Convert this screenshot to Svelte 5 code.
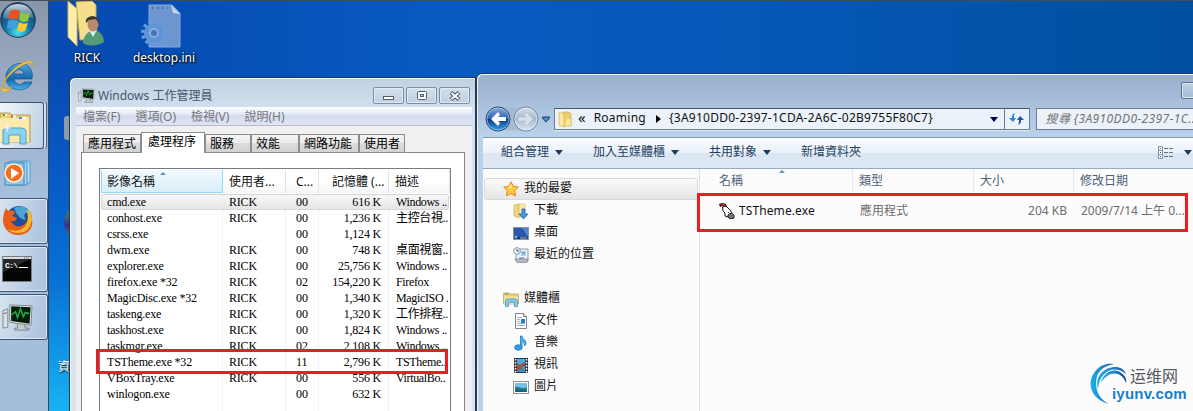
<script lang="ts">
	const processes = [
		{ name: 'cmd.exe', user: 'RICK', cpu: '00', memory: '616 K', desc: 'Windows ..' },
		{ name: 'conhost.exe', user: 'RICK', cpu: '00', memory: '1,236 K', desc: '主控台視..' },
		{ name: 'csrss.exe', user: '', cpu: '00', memory: '1,124 K', desc: '' },
		{ name: 'dwm.exe', user: 'RICK', cpu: '00', memory: '748 K', desc: '桌面視窗..' },
		{ name: 'explorer.exe', user: 'RICK', cpu: '00', memory: '25,756 K', desc: 'Windows ..' },
		{ name: 'firefox.exe *32', user: 'RICK', cpu: '02', memory: '154,220 K', desc: 'Firefox' },
		{ name: 'MagicDisc.exe *32', user: 'RICK', cpu: '00', memory: '1,340 K', desc: 'MagicISO .' },
		{ name: 'taskeng.exe', user: 'RICK', cpu: '00', memory: '1,320 K', desc: '工作排程..' },
		{ name: 'taskhost.exe', user: 'RICK', cpu: '00', memory: '1,824 K', desc: 'Windows ..' },
		{ name: 'taskmgr.exe', user: 'RICK', cpu: '02', memory: '2,108 K', desc: 'Windows ..' },
		{ name: 'TSTheme.exe *32', user: 'RICK', cpu: '11', memory: '2,796 K', desc: 'TSTheme..' },
		{ name: 'VBoxTray.exe', user: 'RICK', cpu: '00', memory: '556 K', desc: 'VirtualBo..' },
		{ name: 'winlogon.exe', user: '', cpu: '00', memory: '632 K', desc: '' }
	];

	const menus = ['檔案(F)', '選項(O)', '檢視(V)', '說明(H)'];

	const tabs = [
		{ label: '應用程式', width: 58 },
		{ label: '處理程序', width: 64, active: true },
		{ label: '服務', width: 46 },
		{ label: '效能', width: 48 },
		{ label: '網路功能', width: 60 },
		{ label: '使用者', width: 46 }
	];

	const commands = [
		{ label: '組合管理', menu: true },
		{ label: '加入至媒體櫃', menu: true },
		{ label: '共用對象', menu: true },
		{ label: '新增資料夾', menu: false }
	];

	const favorites = [
		{ label: '下載', icon: 'download' },
		{ label: '桌面', icon: 'desktop' },
		{ label: '最近的位置', icon: 'recent' }
	];

	const libraries = [
		{ label: '文件', icon: 'document' },
		{ label: '音樂', icon: 'music' },
		{ label: '視訊', icon: 'video' },
		{ label: '圖片', icon: 'picture' }
	];
</script>

{#snippet navIcon(kind: string)}
	<svg class="nav-icon" width="16" height="16" viewBox="0 0 16 16">
		{#if kind === 'download'}
			<path d="M1 2l5-1v14l-5-2z" fill="#efd684" stroke="#c9a64a" stroke-width=".6" />
			<path d="M6 1h6v13H6z" fill="#f8e9a9" stroke="#d4b55c" stroke-width=".6" />
			<path d="M9 6h3v5h3l-4.500 5L6 11h3z" fill="#3e9be8" stroke="#1c65b5" stroke-width=".8" />
		{:else if kind === 'desktop'}
			<rect x=".5" y="2.500" width="15" height="12" fill="#2857a8" stroke="#8a94a0" />
			<path d="M8 3h7v8C12 9 13 6 8 3z" fill="#5287d2" />
			<path d="M1 12h14v2H1z" fill="#18305e" />
			<circle cx="3" cy="12" r="1.500" fill="#59b7ee" />
			<path d="M7 13h7" stroke="#9fc1e8" />
		{:else if kind === 'recent'}
			<path d="M5 2h10v12H3V8" fill="#eef2f5" stroke="#8d969d" />
			<path d="M8 4h5v5H8z" fill="#a2d2f1" />
			<path d="M9 6h3M6 11h5" stroke="#3477b3" />
			<path d="M2 12h13l-1 3.500H4z" fill="#b6bcc0" stroke="#7b848a" stroke-width=".7" />
			<circle cx="4" cy="4" r="3.400" fill="#edf4fb" stroke="#8698a9" />
			<path d="M4 2v2h2" fill="none" stroke="#365a88" />
		{:else if kind === 'document'}
			<path d="M2.500.5h8l3 3v12h-11z" fill="#fff" stroke="#7e858d" />
			<path d="M10.500.5v3h3" fill="#dfe6ed" stroke="#7e858d" />
			<path d="M4 4.500h5M4 6.500h3M4 8.500h3M4 10.500h8M4 12.500h8" stroke="#9eadd1" />
			<path d="M8 6h4v4H8z" fill="#2578c6" />
		{:else if kind === 'music'}
			<path d="M7.500 12V1h1.500c0 3 4 3.500 4 7 0 1.500-1 2.500-1.500 3 0-3-1-4-2.500-4.500V12z" fill="#4cb3ed" stroke="#1c79c1" stroke-width=".8" />
			<ellipse cx="5.400" cy="12.500" rx="3.800" ry="2.800" fill="#309bdf" stroke="#1c79c1" stroke-width=".7" />
		{:else if kind === 'video'}
			<rect x="1" y="1" width="14" height="15" fill="#303841" />
			<path d="M4 2h8v6H4z" fill="#4ba9e6" />
			<path d="M4 9h8v6H4z" fill="#3496d9" />
			<path d="M4 6l3 2 4-3 1 3-4 2 3 4-3-2-4 2z" fill="#a64e31" />
			<path d="M2.500 2v14M13.500 2v14" stroke="#fff" stroke-width="1.500" stroke-dasharray="1.500 1.500" />
		{:else}
			<rect x=".5" y="2.500" width="15" height="12" fill="#fff" stroke="#8d9298" />
			<path d="M2 4h12v9H2z" fill="#75bfeb" />
			<path d="M2 8c4-1 7 3 12 0v5H2z" fill="#277f70" />
			<path d="M2 11c4-2 7 1 12 0v2H2z" fill="#195d9b" />
		{/if}
	</svg>
{/snippet}

{#snippet library(size: number)}
	<svg width={size} height={size} viewBox="0 0 16 16">
		<path d="M.5 2h6l1 1h8v10H.5z" fill="#e8cd72" stroke="#bba250" stroke-width=".7" />
		<path d="M2 3h3" stroke="#35a653" />
		<path d="M1 5h14v8H1z" fill="#f3df92" />
		<path d="M2.500 15.500V10q0-2 2-2h7q3 0 3 2v5.500h-3v-4h-6v4z" fill="#86c9eb" stroke="#4a9cca" stroke-width=".8" />
	</svg>
{/snippet}

{#snippet monitor(size: number)}
	<svg width={size} height={size} viewBox="0 0 32 32">
		<path d="M1 9l5-2v19l-5 1z" fill="#dce1e3" stroke="#7c878c" />
		<path d="M2 12l3-1" stroke="#59656c" />
		<path d="M16 22h7l1 5h4v2H13v-2h3z" fill="#c3ccd0" stroke="#79858a" />
		<path d="M8 3l23 1-1 20-22-3z" fill="#e1e6e8" stroke="#7e898e" />
		<path d="M9.500 4.500l20 1-1 17-19-3z" fill="#071d0b" />
		<path d="M10 13l4-3 2 6 3-9 3 8 2-4 4 1" fill="none" stroke="#27a846" stroke-width="1.600" />
	</svg>
{/snippet}

<div class="screen">
	<aside class="taskbar">
		<div class="slot start">
			<svg width="40" height="40" viewBox="0 0 40 40">
				<defs>
					<radialGradient id="orb" cx=".5" cy=".85" r=".8">
						<stop offset="0" stop-color="#4fe0f5" />
						<stop offset=".45" stop-color="#1572a9" />
						<stop offset="1" stop-color="#17395c" />
					</radialGradient>
					<linearGradient id="gloss" x2="0" y2="1">
						<stop stop-color="#eff7fc" stop-opacity=".85" />
						<stop offset="1" stop-color="#bcd4e5" stop-opacity=".25" />
					</linearGradient>
				</defs>
				<circle cx="18" cy="19" r="17.300" fill="url(#orb)" stroke="#1d3c59" />
				<path d="M3 17C4 6 11 3 18 3s15 4 15 14c-10-3-20 3-30 0z" fill="url(#gloss)" />
				<path d="M10 10c4-2 7-2 10 0l-2 9c-3-2-6-2-10 0z" fill="#e45424" />
				<path d="M21 11c3 2 6 2 9 0l-2 9c-4 2-6 1-9-1z" fill="#8dc63f" />
				<path d="M8 20c3-2 6-2 10 0l-2 8c-3-2-6-2-9 0z" fill="#41a0df" />
				<path d="M19 21c3 2 5 2 9 1l-3 8c-3 1-5 1-8-1z" fill="#f8ca36" />
			</svg>
		</div>
		<div class="slot ie">
			<svg width="38" height="34" viewBox="0 0 38 34">
				<defs>
					<linearGradient id="e-fill" x2="0" y2="1">
						<stop stop-color="#4ba6e2" /><stop offset=".6" stop-color="#1465ae" /><stop offset="1" stop-color="#49b6ee" />
					</linearGradient>
				</defs>
				<path d="M32 19H14c1 6 8 7 10 3h8C28 33 8 33 6 19 5 5 20 0 28 6c4 4 5 8 4 13zM14 14h10c-1-6-9-6-10 0z" fill="url(#e-fill)" stroke="#165389" stroke-width=".7" />
				<path d="M32 7C34-1 21 4 11 14 2 23 1 30 6 29c2 0 4-1 6-3-3 6-12 9-10 1C4 18 14 6 25 2c6-2 9-1 7 5z" fill="#f6c83e" stroke="#cd941c" stroke-width=".6" />
			</svg>
		</div>
		<div class="slot task folder">
			<svg width="34" height="36" viewBox="0 0 34 36">
				<path d="M0 2h10l2 2h18v27H0z" fill="#efcf76" stroke="#b99c50" />
				<path d="M0 7h29v24H0z" fill="#faebac" />
				<path d="M3 4h4M12 5.500h4M20 7h6" stroke="#fff" stroke-width="2" />
				<path d="M3 4h2" stroke="#2aa952" stroke-width="2" /><path d="M11 5.500h2" stroke="#d84230" stroke-width="2" /><path d="M19 7h3" stroke="#3b91d7" stroke-width="2" />
				<path d="M3 33V20q0-3 4-3h14q5 0 5 4v12h-6V24H9v9z" fill="#8cd1ed" stroke="#4aa2c9" />
				<path d="M7 13v8M3 17h8" stroke="#fff" />
			</svg>
		</div>
		<div class="slot media">
			<svg width="34" height="32" viewBox="0 0 34 32">
				<path d="M9 3h19v22H9z" fill="#b6dcf1" stroke="#5c9fc7" />
				<path d="M6 4h19v23H6z" fill="#a7d2eb" stroke="#4a95c2" />
				<path d="M3 5h19v22H3z" fill="#91c5e6" stroke="#418bbb" />
				<circle cx="12" cy="15" r="9" fill="#f06e1d" stroke="#fff0d6" stroke-width="1.500" />
				<path d="M9 10l8 5-8 6z" fill="#fff" />
			</svg>
		</div>
		<div class="slot task">
			<svg width="34" height="34" viewBox="0 0 34 34">
				<circle cx="17" cy="15" r="13" fill="#1d4f94" />
				<path d="M12 4c6-3 13-1 15 5-5-1-6 3-3 7-5 0-9-4-12-12z" fill="#4ba4d7" />
				<path d="M4 4c1 2 2 3 4 3 2-1 5 0 5 2l-3 3c2 1 4 1 5 2-1 3-3 4-6 3 2 5 8 7 12 4 4-2 6-7 4-12l5 6C32 25 25 31 16 31 7 31 1 24 1 16 1 12 2 8 4 4z" fill="#e95f19" />
				<path d="M25 5c5 4 6 9 4 14-1 6-6 10-13 10-4 0-7-1-10-4 11 5 20-2 20-11 0-4-1-6-1-9z" fill="#f8b831" />
			</svg>
		</div>
		<div class="slot task">
			<svg width="30" height="26" viewBox="0 0 30 26">
				<rect x=".5" y=".5" width="29" height="25" fill="#050505" stroke="#777e85" />
				<path d="M1 1h28v2H1z" fill="#d9dddf" />
				<path d="M22 2h6" stroke="#555" stroke-dasharray="1 1" />
				<path d="M1 3h28L1 16z" fill="#454545" opacity=".55" />
				<text x="3" y="12" class="prompt">C:\</text>
				<path d="M17 11.500h9" stroke="#fff" />
			</svg>
		</div>
		<div class="slot task">{@render monitor(31)}</div>
	</aside>

	<div class="shortcut user">
		<svg width="40" height="47" viewBox="0 0 40 47">
			<path d="M9 1l16-1 4 4v34l-16 1z" fill="#f5df8d" stroke="#c6a950" />
			<path d="M1 0l9 8v37L1 36z" fill="#ffedac" stroke="#d2b762" />
			<path d="M16 42c0-7 6-13 11-13 7 1 10 7 10 12-5 4-16 5-21 1z" fill="#569b77" />
			<path d="M22 29l4 7 4-7z" fill="#e0efe5" />
			<ellipse cx="26" cy="23" rx="5.500" ry="7.500" fill="#b88b6d" />
			<path d="M19 22c-2-9 15-9 13 1l-3-5-7 1z" fill="#38342f" />
		</svg>
		<span>RICK</span>
	</div>
	<div class="shortcut ini">
		<svg width="40" height="45" viewBox="0 0 40 45">
			<path d="M8 2h23l8 8v34H8z" fill="#88a9d8" stroke="#a4bfe3" opacity=".8" />
			<path d="M30 2l2 8 7 1z" fill="#c5d6ef" />
			<path d="M11 5h16" stroke="#4d77b6" stroke-width="2" stroke-dasharray="2 3" />
			<path d="M13 14h22M13 18h22M13 22h22M13 26h22M13 30h22M13 34h22" stroke="#6f96cd" />
			<circle cx="13" cy="30" r="11" fill="none" stroke="#6a9bda" stroke-width="4" stroke-dasharray="3 2.760" />
			<circle cx="13" cy="30" r="7.500" fill="#8cafdd" stroke="#5f94d5" stroke-width="5" />
			<circle cx="13" cy="30" r="3" fill="#3f74b8" />
		</svg>
		<span>desktop.ini</span>
	</div>
	<div class="desktop-orb"></div>
	<div class="desktop-recycle"></div>
	<span class="desktop-label">資</span>

	<section class="taskmgr">
		<header class="titlebar">
			{@render monitor(17)}
			<h1>Windows <b>工作管理員</b></h1>
			<div class="controls">
				<span><svg width="12" height="12"><rect x=".5" y="6.500" width="10" height="3" fill="#fff" stroke="#525d6c" /></svg></span>
				<span><svg width="12" height="12"><rect x="1.500" y="1.500" width="9" height="8" rx="1" fill="#fff" stroke="#525d6c" /><rect x="4.500" y="4.500" width="3" height="2" fill="#b5c8dc" stroke="#525d6c" /></svg></span>
				<span><svg width="12" height="12"><path d="M2 2.500l8 7M10 2.500l-8 7" stroke="#525d6c" stroke-width="4" /><path d="M2.500 3l7 6M9.500 3l-7 6" stroke="#fff" stroke-width="1.800" /></svg></span>
			</div>
		</header>
		<nav class="menubar">
			{#each menus as item}<span>{item}</span>{/each}
		</nav>
		<div class="client">
			<div class="tabs">
				{#each tabs as tab}
					<div class="tab" class:active={tab.active} style="width: {tab.width}px">{tab.label}</div>
				{/each}
			</div>
			<div class="panel">
				<div class="list">
					<div class="grid head">
						<span class="sorted">影像名稱</span>
						<span>使用者...</span>
						<span>C...</span>
						<span>記憶體 (...</span>
						<span>描述</span>
					</div>
					<div class="rows">
						{#each processes as process, i}
							<div class="grid row" class:focused={i === 0}>
								<span>{process.name}</span>
								<span>{process.user}</span>
								<span>{process.cpu}</span>
								<span>{process.memory}</span>
								<span>{process.desc}</span>
							</div>
						{/each}
					</div>
				</div>
			</div>
		</div>
	</section>

	<section class="explorer">
		<div class="caption"><span class="window-button"></span></div>
		<div class="location">
			<svg class="history" width="70" height="28" viewBox="0 0 70 28">
				<defs>
					<linearGradient id="back" x2="0" y2="1">
						<stop stop-color="#8aaede" /><stop offset=".48" stop-color="#2b64b4" />
						<stop offset=".5" stop-color="#0b3486" /><stop offset="1" stop-color="#30a8eb" />
					</linearGradient>
					<linearGradient id="forward" x2="0" y2="1">
						<stop stop-color="#d4e0ec" /><stop offset=".5" stop-color="#a4b8ce" /><stop offset="1" stop-color="#dce9f5" />
					</linearGradient>
				</defs>
				<path d="M14 2c10 0 14 2 28 0l10 5v14l-10 5-28-1z" fill="#a0b5cd" opacity=".7" />
				<circle cx="14" cy="14" r="12" fill="url(#back)" stroke="#27446e" />
				<circle cx="14" cy="14" r="11" fill="none" stroke="#b4d1f1" opacity=".7" />
				<path d="M7 14l7-7 2 3-2 2h8v4h-8l2 2-2 3z" fill="#fff" />
				<circle cx="42" cy="14" r="12" fill="url(#forward)" stroke="#70839c" />
				<circle cx="42" cy="14" r="11" fill="none" stroke="#e9f2fa" opacity=".7" />
				<path d="M49 14l-7-7-2 3 2 2h-8v4h8l-2 2 2 3z" fill="#d5e0eb" stroke="#a9b9cc" stroke-width=".5" />
				<path d="M58.500 12h7v1l-3.500 4-3.500-4z" fill="#4d91c9" stroke="#183b6b" />
			</svg>
			<div class="address">
				<svg width="15" height="17" viewBox="0 0 15 17">
					<path d="M5 1h6l2 2v12H5z" fill="#edcf70" stroke="#c1a044" stroke-width=".6" />
					<path d="M1 1l5 2v13l-5-2z" fill="#ffe9a0" stroke="#d0ad4c" stroke-width=".6" />
					<path d="M9 7h4v8H7" fill="#ffe79b" stroke="#cdae58" stroke-width=".5" />
				</svg>
				<span class="chevrons">«</span>
				<span class="crumb">Roaming</span>
				<svg class="arrow" width="5" height="8"><path d="M0 0l5 4-5 4z" fill="#000" /></svg>
				<span class="crumb guid">{'{3A910DD0-2397-1CDA-2A6C-02B9755F80C7}'}</span>
				<svg class="drop" width="8" height="5"><path d="M0 0h8L4 5z" fill="#00005c" /></svg>
				<span class="refresh">
					<svg width="15" height="14" viewBox="0 0 15 14">
						<path d="M6 1C3 2 3 4 3 6H0l4 4 3-4H5c0-2 0-3 1-5z" fill="#2787d5" />
						<path d="M9 13c3-1 3-3 3-5h3l-4-4-3 4h2c0 2 0 3-1 5z" fill="#1c57a7" />
					</svg>
				</span>
			</div>
			<div class="search">搜尋 {'{3A910DD0-2397-1C...'}</div>
		</div>
		<div class="commands">
			{#each commands as command}
				<span>{command.label}{#if command.menu}<svg width="8" height="5"><path d="M0 0h8L4 5z" fill="#1e395b" /></svg>{/if}</span>
			{/each}
			<div class="view">
				<svg width="16" height="13" viewBox="0 0 16 13">
					<path d="M.5.5h4v12h-4zM.5 4.500h4M.5 8.500h4" fill="#fff" stroke="#8692a3" />
					<path d="M2 2.500h1M2 6.500h1M2 10.500h1" stroke="#334c75" />
					<path d="M6 2.500h9M6 6.500h9M6 10.500h9" stroke="#667487" stroke-dasharray="4 1" />
				</svg>
				<svg width="8" height="5"><path d="M0 0h8L4 5z" fill="#1e395b" /></svg>
			</div>
		</div>
		<div class="body">
			<nav class="sidebar">
				<div class="group selected">
					<svg width="16" height="16" viewBox="0 0 16 16"><path d="M8 .8l2.300 4.600 5 .7-3.600 3.600.9 5.200L8 12.500l-4.600 2.400.9-5.200L.7 6.100l5-.7z" fill="#ffcc3f" stroke="#e38321" /><path d="M8 3l1 4-5-.5 2-.5z" fill="#fff0a0" /></svg>
					<span>我的最愛</span>
				</div>
				{#each favorites as item}
					<div class="entry">{@render navIcon(item.icon)}<span>{item.label}</span></div>
				{/each}
				<div class="group libraries">{@render library(16)}<span>媒體櫃</span></div>
				{#each libraries as item}
					<div class="entry">{@render navIcon(item.icon)}<span>{item.label}</span></div>
				{/each}
			</nav>
			<div class="files">
				<div class="columns heading">
					<span class="sorted">名稱</span><span>類型</span><span>大小</span><span>修改日期</span>
				</div>
				<div class="columns file">
					<span>
						<svg width="16" height="16" viewBox="0 0 16 16">
							<path d="M0 1l3-1 4 1 1 3-1 1-4-2-2 1z" fill="#111" />
							<path d="M1 1l5 1v1L3 2z" fill="#ef2b2b" stroke="#ef2b2b" stroke-width=".6" />
							<path d="M3.500 4l.5 4 2 2v3l2 1 5-4-2-3-4-4z" fill="#fff" stroke="#111" />
							<path d="M9 9l5 4" stroke="#222" stroke-dasharray="1.500 1" />
							<path d="M9 12l3-2 3 2v3l-4 1-2-2z" fill="#777" stroke="#222" />
						</svg>
						<em>TSTheme.exe</em>
					</span>
					<span>應用程式</span><span>204 KB</span><span>2009/7/14 上午 0...</span>
				</div>
			</div>
		</div>
	</section>

	<div class="marker process-marker"></div>
	<div class="marker file-marker"></div>

	<div class="watermark">
		<svg width="40" height="42" viewBox="0 0 40 42">
			<defs><linearGradient id="swoosh" x2="1"><stop stop-color="#1cb0ee" /><stop offset=".6" stop-color="#1b7cc6" /><stop offset="1" stop-color="#164c8f" /></linearGradient></defs>
			<path d="M20 41C3 37-3 21 5 10 10 2 18 0 25 1 13 3 7 10 7 20c0 10 5 17 13 21z" fill="url(#swoosh)" />
			<path d="M9 26C5 12 17 3 28 4c5 1 8 4 9 7C26 1 10 8 9 26z" fill="url(#swoosh)" />
			<path d="M12 20C14 9 25 5 31 9c5 3 7 7 6 11-5-13-18-12-25 0z" fill="url(#swoosh)" />
		</svg>
		<div class="brand"><span>运维网</span><strong>iyunv.com</strong></div>
	</div>
</div>

<style>
	:global(body) {
		overflow: hidden;
	}

	.screen {
		position: relative;
		width: 1193px;
		height: 411px;
		overflow: hidden;
		box-sizing: border-box;
		border-top: 1px solid #434b55;
		background: linear-gradient(90deg, #074cb3 0, #054cb2 12%, #075bc0 38%, #0559b8 60%, #004f9f);
		font: 12px/16px "Noto Sans", "Noto Sans CJK TC", sans-serif;
		color: #111;
	}

	.screen *,
	.screen *::before {
		box-sizing: border-box;
	}

	.screen::before {
		content: "";
		position: absolute;
		left: 49px;
		top: 80px;
		width: 24px;
		height: 330px;
		background: linear-gradient(#074cb3, #0758c5 25%, #0871d5 60%, #17b3f3);
	}

	svg {
		display: block;
		flex: none;
	}

	.taskbar {
		position: relative;
		width: 49px;
		height: 410px;
		border-right: 1px solid #33485f;
		background: linear-gradient(#8896aa, #9fb2ca 25%, #a6c0df 50%, #a4bdda);
	}

	.slot {
		height: 48px;
		display: flex;
		align-items: center;
	}

	.start {
		height: 40px;
	}

	.ie {
		height: 61px;
		padding: 11px 0 0;
	}

	.task {
		height: 46px;
		width: 48px;
		margin-bottom: 2px;
		padding-left: 2px;
		border: 1px solid #3d556f;
		border-left: 0;
		border-radius: 0 3px 3px 0;
		background: linear-gradient(100deg, #d6e2ef, #a9c1dc);
		box-shadow: inset -1px 1px 0 #dae8f5, inset 0 -1px 0 #dae8f5;
	}

	.folder {
		height: 47px;
		width: 44px;
		padding: 7px 0 0;
		margin-bottom: 0;
		background: linear-gradient(100deg, #f3f6f9, #bed1e5);
		box-shadow: 2px 0 0 #d4e2f0, 3px 0 0 #48617c;
	}

	.media {
		height: 49px;
		padding-left: 2px;
	}

	.prompt {
		font: bold 8px "Liberation Mono", monospace;
		letter-spacing: -0.500px;
		fill: #fff;
	}

	.shortcut {
		position: absolute;
		top: 0;
		display: flex;
		flex-direction: column;
		align-items: center;
		color: #fff;
		text-shadow: 1px 1px 2px #000, 0 0 2px #000;
	}

	.user {
		left: 65px;
		width: 44px;
		gap: 2px;
	}

	.ini {
		left: 129px;
		width: 70px;
		padding-top: 2px;
		gap: 2px;
	}

	.ini svg {
		margin-left: -7px;
	}

	.desktop-orb,
	.desktop-recycle {
		position: absolute;
		left: 64px;
		top: 208px;
		width: 18px;
		height: 28px;
		border-radius: 50%;
		background: linear-gradient(#3c9360, #392f94 60%, #238c54);
	}

	.desktop-recycle {
		top: 115px;
		height: 24px;
		border-radius: 3px;
		background: #8b9caa;
	}

	.desktop-label {
		position: absolute;
		left: 58px;
		top: 358px;
		color: #fff;
		text-shadow: 1px 1px 2px #000;
	}

	.taskmgr {
		position: absolute;
		left: 69px;
		top: 76px;
		width: 407px;
		height: 345px;
		padding: 0 3px 0 6px;
		border: 1px solid #27384a;
		border-radius: 6px 0 0 0;
		background: linear-gradient(#c0d0e1, #d5e1ef 35px, #d7e4f2);
		box-shadow: inset 1px 1px 0 #eef5fc;
	}

	.titlebar {
		height: 29px;
		display: flex;
		align-items: center;
		padding: 6px 1px 0 2px;
	}

	.titlebar h1 {
		margin: 0 auto 0 3px;
		font-size: 12px;
		font-weight: 400;
		color: #46586e;
	}

	.titlebar b {
		font-weight: 400;
	}

	.controls {
		display: flex;
		gap: 2px;
		padding-right: 1px;
	}

	.controls span {
		width: 31px;
		height: 17px;
		display: grid;
		place-items: center;
		border: 1px solid #7c8ea5;
		border-radius: 2px;
		background: linear-gradient(#d3e0ed, #bfcee0);
		box-shadow: inset 0 0 0 1px #e1ebf5;
	}

	.menubar {
		height: 19px;
		display: flex;
		gap: 15px;
		padding: 0 7px;
		color: #77777e;
		line-height: 19px;
		background: linear-gradient(#fcfdff, #e7ebf8 40%, #d3dbed 45%, #dfe5f5);
		border-bottom: 1px solid #b6bccc;
	}

	.client {
		height: 300px;
		padding: 6px 7px 0 5px;
		background: #f0f0f0;
	}

	.tabs {
		display: flex;
		align-items: flex-end;
		height: 21px;
		padding-left: 2px;
		position: relative;
		z-index: 1;
	}

	.tab {
		height: 19px;
		padding-left: 4px;
		border: 1px solid #8a8d95;
		color: #000;
		line-height: 18px;
		white-space: nowrap;
		background: linear-gradient(#f4f4f4, #ececec 48%, #dcdcdc 50%, #d2d2d2);
	}

	.tab.active {
		height: 21px;
		padding-left: 6px;
		border-bottom: 0;
		background: #fff;
	}

	.panel {
		height: 290px;
		margin-top: -1px;
		padding: 15px 13px 0 17px;
		border: 1px solid #83868f;
		background: #fff;
	}

	.list {
		height: 280px;
		border: 1px solid #777b86;
		padding: 1px 1px 0;
		overflow: hidden;
	}

	.grid {
		display: grid;
		grid-template-columns: 122px 63px 33px 70px 61px;
	}

	.grid span {
		white-space: nowrap;
		overflow: hidden;
	}

	.head {
		height: 23px;
		line-height: 24px;
		background: linear-gradient(#fff, #fff 50%, #f5f6f8);
	}

	.head span {
		padding-left: 6px;
		border-right: 1px solid #dfe4ec;
	}

	.head span:nth-child(3) {
		padding-left: 10px;
	}

	.head span:nth-child(4) {
		padding-left: 13px;
	}

	.sorted {
		position: relative;
	}

	.sorted::before {
		content: "";
		position: absolute;
		left: 58px;
		top: 2px;
		border: 3px solid transparent;
		border-top: 0;
		border-bottom-color: #5a98b8;
	}

	.head .sorted {
		padding-left: 5px;
		border: 1px solid #96d9f9;
		border-top: 0;
		background: linear-gradient(#f3fafd, #e5f4fb 50%, #d9eef8);
	}

	.rows {
		padding-top: 1px;
		background: linear-gradient(90deg, transparent 121px, #e9f1fb 121px 122px, transparent 122px 184px, #e9f1fb 184px 185px, transparent 185px 217px, #e9f1fb 217px 218px, transparent 218px 287px, #e9f1fb 287px 288px, transparent 288px);
		height: 255px;
	}

	.row {
		height: 16px;
		font: 12px/16px "Liberation Serif", "Noto Sans CJK TC", serif;
		color: #000;
	}

	.row.focused {
		border-radius: 3px;
		background: linear-gradient(#f9f9f9, #e4e4e4);
		box-shadow: inset 0 0 0 1px #d6d6d6;
	}

	.row span {
		padding-left: 6px;
		letter-spacing: -0.200px;
	}

	.row span:nth-child(3) {
		padding-left: 10px;
		letter-spacing: 0;
	}

	.row span:nth-child(4) {
		padding: 0 8px 0 0;
		text-align: right;
	}

	.row span:nth-child(5) {
		padding-left: 7px;
		letter-spacing: -0.350px;
	}

	.explorer {
		position: absolute;
		left: 476px;
		top: 72px;
		width: 730px;
		height: 350px;
		padding-left: 6px;
		border: 1px solid #27394d;
		border-radius: 6px 0 0 0;
		background: linear-gradient(#98b0cd, #b9d1ea 62px, #bbd3ec);
		box-shadow: inset 1px 1px 0 #eef6fd;
	}

	.caption {
		height: 27px;
		display: flex;
		justify-content: flex-end;
		padding: 8px 6px 0;
	}

	.window-button {
		width: 36px;
		height: 17px;
		margin-right: -18px;
		border: 1px solid #5b728d;
		border-radius: 2px;
		background: linear-gradient(#c1d2e4, #a3bbd5);
		box-shadow: inset 0 0 0 1px #dbe8f4;
	}

	.location {
		display: flex;
		align-items: center;
		height: 36px;
		padding-left: 1px;
	}

	.address {
		width: 477px;
		height: 22px;
		display: flex;
		align-items: center;
		padding-left: 3px;
		border: 1px solid #6d7d90;
		border-top-color: #485766;
		background: #ecf2fa;
		box-shadow: 0 1px 0 #dce9f6;
	}

	.chevrons {
		margin-left: 5px;
		padding-bottom: 4px;
		font-size: 15px;
	}

	.crumb {
		margin-left: 8px;
		padding-bottom: 2px;
		letter-spacing: 0.250px;
		white-space: nowrap;
	}

	.arrow {
		margin-left: 10px;
	}

	.drop {
		margin-left: auto;
		margin-right: 6px;
	}

	.refresh {
		width: 25px;
		height: 20px;
		display: grid;
		place-items: center;
		border-left: 1px solid #6d7d90;
	}

	.search {
		width: 170px;
		height: 22px;
		margin-left: 6px;
		padding-left: 9px;
		overflow: hidden;
		white-space: nowrap;
		border: 1px solid #6d7d90;
		background: #ecf2fa;
		color: #747474;
		font-style: italic;
		letter-spacing: 0.400px;
		line-height: 19px;
	}

	.commands {
		height: 32px;
		display: flex;
		align-items: center;
		gap: 30px;
		padding: 0 0 2px 18px;
		border-top: 1px solid #7f98b8;
		border-bottom: 1px solid #9aaac1;
		background: linear-gradient(#fbfdff, #eaf1fa 48%, #dce6f3 52%, #dfe8f5);
		color: #24405f;
	}

	.commands span {
		display: flex;
		align-items: center;
		gap: 6px;
	}

	.view {
		display: flex;
		align-items: center;
		gap: 10px;
		margin-left: 267px;
	}

	.body {
		height: 255px;
		display: flex;
		background: #fcfcfc;
	}

	.sidebar {
		width: 217px;
		padding: 9px 1px 0;
		border-right: 1px solid #d6e5f5;
	}

	.group,
	.entry {
		height: 22px;
		display: flex;
		align-items: center;
		gap: 5px;
		padding-left: 19px;
	}

	.group.selected {
		border: 1px solid #d9d9d9;
		border-radius: 3px;
		background: linear-gradient(#fafafa, #e5e5e5);
		padding-left: 18px;
	}

	.group span,
	.entry span {
		padding-bottom: 2px;
	}

	.entry {
		padding-left: 29px;
	}

	.libraries {
		margin-top: 22px;
	}

	.files {
		flex: 1;
	}

	.columns {
		display: grid;
		grid-template-columns: 153px 121px 100px 130px;
		color: #6d6d6d;
		white-space: nowrap;
	}

	.heading {
		height: 22px;
		line-height: 24px;
		color: #4c607a;
	}

	.heading span {
		padding-left: 6px;
		border-right: 1px solid #dfeaf5;
	}

	.heading .sorted {
		padding-left: 19px;
	}

	.heading .sorted::before {
		left: 79px;
		top: 1px;
	}

	.file {
		height: 20px;
		margin-top: 10px;
		align-items: center;
	}

	.file span {
		padding-left: 7px;
	}

	.file span:first-child {
		display: flex;
		gap: 4px;
		padding-left: 19px;
	}

	.file span:nth-child(3) {
		padding-right: 7px;
		text-align: right;
	}

	.file em {
		font-style: normal;
		letter-spacing: 0.100px;
		color: #111;
	}

	.marker {
		position: absolute;
		border: 3px solid #ed1c24;
	}

	.process-marker {
		left: 96px;
		top: 348px;
		width: 352px;
		height: 25px;
	}

	.file-marker {
		left: 697px;
		top: 192px;
		width: 491px;
		height: 39px;
	}

	.watermark {
		position: absolute;
		left: 1089px;
		top: 362px;
		display: flex;
	}

	.brand {
		display: flex;
		flex-direction: column;
		margin-left: -17px;
		padding-top: 3px;
	}

	.brand span {
		padding-left: 18px;
		font: 16px/18px "Noto Sans CJK SC", sans-serif;
		color: #55585f;
	}

	.brand strong {
		margin-top: 2px;
		font: bold 15px/16px "Liberation Sans", sans-serif;
		letter-spacing: 0.200px;
		color: #1680d0;
	}
</style>
